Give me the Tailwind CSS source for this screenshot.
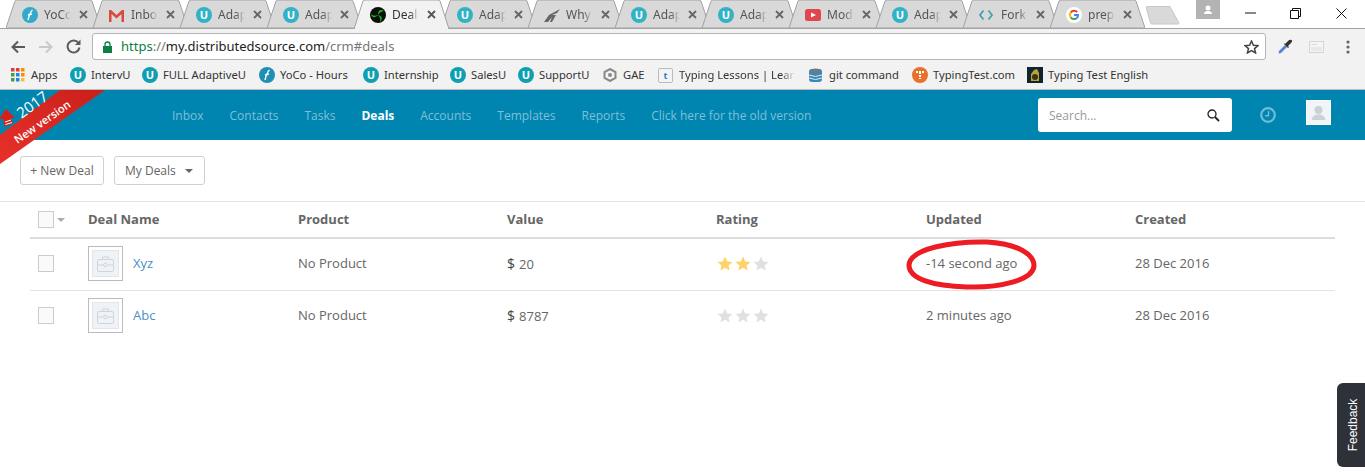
<!DOCTYPE html>
<html lang="en">
<head>
  <meta charset="UTF-8">
  <script src="https://cdn.jsdelivr.net/npm/@tailwindcss/browser@4"></script>
  <title>Deals</title>
</head>
<body class="bg-white font-['Open_Sans',sans-serif] overflow-hidden">
<div class="relative w-[1365px] h-[474px] overflow-hidden">

  <!-- tab strip -->
  <div class="h-[29px] flex items-start pl-[6px] relative border-b border-[#a3a3a3] font-['Noto_Sans',sans-serif] text-[12px] text-[#555]">
    <div class="relative w-[95px] h-[28px] shrink-0">
      <svg class="absolute inset-0" width="95" height="28"><path d="M0 28 L9 1 Q9.500 0 11 0 L84 0 Q85.500 0 86 1 L95 28Z" fill="#d9d9d9" stroke="#a3a3a3"/></svg>
      <svg class="absolute left-[16px] top-[7px]" width="16" height="16" viewBox="0 0 16 16"><circle cx="8" cy="8" r="8" fill="#35a9cb"/><path d="M10.500 3 C8 5 7 9 6 13 M6 8 L10 7" stroke="#fff" stroke-width="1.400" fill="none"/></svg>
      <span class="absolute left-[38px] top-[6px] w-[27px] overflow-hidden whitespace-nowrap [mask-image:linear-gradient(to_right,black_65%,transparent)]">YoCo</span>
      <span class="absolute left-[73px] top-[10px]"><svg class="block" width="10" height="10"><path d="M1 1 L8 8 M8 1 L1 8" stroke="#666" stroke-width="1.800"/></svg></span>
    </div>
    <div class="relative w-[95px] h-[28px] shrink-0 -ml-[8px]">
      <svg class="absolute inset-0" width="95" height="28"><path d="M0 28 L9 1 Q9.500 0 11 0 L84 0 Q85.500 0 86 1 L95 28Z" fill="#d9d9d9" stroke="#a3a3a3"/></svg>
      <svg class="absolute left-[16px] top-[10px]" width="15" height="12" viewBox="0 0 15 12"><path d="M0 0 L2 0 L7.500 5 L13 0 L15 0 L15 12 L12.500 12 L12.500 4 L7.500 8.500 L2.500 4 L2.500 12 L0 12Z" fill="#d9493c"/></svg>
      <span class="absolute left-[38px] top-[6px] w-[27px] overflow-hidden whitespace-nowrap [mask-image:linear-gradient(to_right,black_65%,transparent)]">Inbox</span>
      <span class="absolute left-[73px] top-[10px]"><svg class="block" width="10" height="10"><path d="M1 1 L8 8 M8 1 L1 8" stroke="#666" stroke-width="1.800"/></svg></span>
    </div>
    <div class="relative w-[95px] h-[28px] shrink-0 -ml-[8px]">
      <svg class="absolute inset-0" width="95" height="28"><path d="M0 28 L9 1 Q9.500 0 11 0 L84 0 Q85.500 0 86 1 L95 28Z" fill="#d9d9d9" stroke="#a3a3a3"/></svg>
      <span class="absolute left-[16px] top-[7px] w-[16px] h-[16px] rounded-full bg-[#30b3c6] text-white text-[11px] leading-[16px] text-center font-bold">U</span>
      <span class="absolute left-[38px] top-[6px] w-[27px] overflow-hidden whitespace-nowrap [mask-image:linear-gradient(to_right,black_65%,transparent)]">Adap</span>
      <span class="absolute left-[73px] top-[10px]"><svg class="block" width="10" height="10"><path d="M1 1 L8 8 M8 1 L1 8" stroke="#666" stroke-width="1.800"/></svg></span>
    </div>
    <div class="relative w-[95px] h-[28px] shrink-0 -ml-[8px]">
      <svg class="absolute inset-0" width="95" height="28"><path d="M0 28 L9 1 Q9.500 0 11 0 L84 0 Q85.500 0 86 1 L95 28Z" fill="#d9d9d9" stroke="#a3a3a3"/></svg>
      <span class="absolute left-[16px] top-[7px] w-[16px] h-[16px] rounded-full bg-[#30b3c6] text-white text-[11px] leading-[16px] text-center font-bold">U</span>
      <span class="absolute left-[38px] top-[6px] w-[27px] overflow-hidden whitespace-nowrap [mask-image:linear-gradient(to_right,black_65%,transparent)]">Adap</span>
      <span class="absolute left-[73px] top-[10px]"><svg class="block" width="10" height="10"><path d="M1 1 L8 8 M8 1 L1 8" stroke="#666" stroke-width="1.800"/></svg></span>
    </div>
    <div class="relative w-[95px] h-[29px] shrink-0 -ml-[8px] z-10 text-[#333]">
      <svg class="absolute inset-0" width="95" height="29"><path d="M0 29 L9 1 Q9.500 0 11 0 L84 0 Q85.500 0 86 1 L95 29Z" fill="#f2f2f2" stroke="#a3a3a3"/><path d="M1 29 L94 29" stroke="#f2f2f2" stroke-width="2"/></svg>
      <svg class="absolute left-[16px] top-[7px]" width="16" height="16" viewBox="0 0 16 16"><circle cx="8" cy="8" r="8" fill="#0a0f0a"/><path d="M8 8 C8 3 11 2 14 4 C12 4 10 5 8 8 M8 8 C12 9 13 12 10 15 C11 12 10 10 8 8 M8 8 C5 11 2 11 1 7 C3 9 5 9 8 8" fill="#18c418"/></svg>
      <span class="absolute left-[38px] top-[6px] w-[27px] overflow-hidden whitespace-nowrap [mask-image:linear-gradient(to_right,black_65%,transparent)]">Deals</span>
      <span class="absolute left-[73px] top-[10px]"><svg class="block" width="10" height="10"><path d="M1 1 L8 8 M8 1 L1 8" stroke="#555" stroke-width="1.800"/></svg></span>
    </div>
    <div class="relative w-[95px] h-[28px] shrink-0 -ml-[8px]">
      <svg class="absolute inset-0" width="95" height="28"><path d="M0 28 L9 1 Q9.500 0 11 0 L84 0 Q85.500 0 86 1 L95 28Z" fill="#d9d9d9" stroke="#a3a3a3"/></svg>
      <span class="absolute left-[16px] top-[7px] w-[16px] h-[16px] rounded-full bg-[#30b3c6] text-white text-[11px] leading-[16px] text-center font-bold">U</span>
      <span class="absolute left-[38px] top-[6px] w-[27px] overflow-hidden whitespace-nowrap [mask-image:linear-gradient(to_right,black_65%,transparent)]">Adap</span>
      <span class="absolute left-[73px] top-[10px]"><svg class="block" width="10" height="10"><path d="M1 1 L8 8 M8 1 L1 8" stroke="#666" stroke-width="1.800"/></svg></span>
    </div>
    <div class="relative w-[95px] h-[28px] shrink-0 -ml-[8px]">
      <svg class="absolute inset-0" width="95" height="28"><path d="M0 28 L9 1 Q9.500 0 11 0 L84 0 Q85.500 0 86 1 L95 28Z" fill="#d9d9d9" stroke="#a3a3a3"/></svg>
      <svg class="absolute left-[16px] top-[9px]" width="16" height="13" viewBox="0 0 16 13"><path d="M0 13 L5 6 L16 0 L13 4 L8 6 L12 6 L8 13 L6 13 L8 8 L4 13Z" fill="#666"/></svg>
      <span class="absolute left-[38px] top-[6px] w-[27px] overflow-hidden whitespace-nowrap [mask-image:linear-gradient(to_right,black_65%,transparent)]">Why</span>
      <span class="absolute left-[73px] top-[10px]"><svg class="block" width="10" height="10"><path d="M1 1 L8 8 M8 1 L1 8" stroke="#666" stroke-width="1.800"/></svg></span>
    </div>
    <div class="relative w-[95px] h-[28px] shrink-0 -ml-[8px]">
      <svg class="absolute inset-0" width="95" height="28"><path d="M0 28 L9 1 Q9.500 0 11 0 L84 0 Q85.500 0 86 1 L95 28Z" fill="#d9d9d9" stroke="#a3a3a3"/></svg>
      <span class="absolute left-[16px] top-[7px] w-[16px] h-[16px] rounded-full bg-[#30b3c6] text-white text-[11px] leading-[16px] text-center font-bold">U</span>
      <span class="absolute left-[38px] top-[6px] w-[27px] overflow-hidden whitespace-nowrap [mask-image:linear-gradient(to_right,black_65%,transparent)]">Adap</span>
      <span class="absolute left-[73px] top-[10px]"><svg class="block" width="10" height="10"><path d="M1 1 L8 8 M8 1 L1 8" stroke="#666" stroke-width="1.800"/></svg></span>
    </div>
    <div class="relative w-[95px] h-[28px] shrink-0 -ml-[8px]">
      <svg class="absolute inset-0" width="95" height="28"><path d="M0 28 L9 1 Q9.500 0 11 0 L84 0 Q85.500 0 86 1 L95 28Z" fill="#d9d9d9" stroke="#a3a3a3"/></svg>
      <span class="absolute left-[16px] top-[7px] w-[16px] h-[16px] rounded-full bg-[#30b3c6] text-white text-[11px] leading-[16px] text-center font-bold">U</span>
      <span class="absolute left-[38px] top-[6px] w-[27px] overflow-hidden whitespace-nowrap [mask-image:linear-gradient(to_right,black_65%,transparent)]">Adap</span>
      <span class="absolute left-[73px] top-[10px]"><svg class="block" width="10" height="10"><path d="M1 1 L8 8 M8 1 L1 8" stroke="#666" stroke-width="1.800"/></svg></span>
    </div>
    <div class="relative w-[95px] h-[28px] shrink-0 -ml-[8px]">
      <svg class="absolute inset-0" width="95" height="28"><path d="M0 28 L9 1 Q9.500 0 11 0 L84 0 Q85.500 0 86 1 L95 28Z" fill="#d9d9d9" stroke="#a3a3a3"/></svg>
      <svg class="absolute left-[16px] top-[9px]" width="16" height="12" viewBox="0 0 16 12"><rect width="16" height="12" rx="2.500" fill="#e0474c"/><path d="M6 3.500 L11 6 L6 8.500Z" fill="#fff"/></svg>
      <span class="absolute left-[38px] top-[6px] w-[27px] overflow-hidden whitespace-nowrap [mask-image:linear-gradient(to_right,black_65%,transparent)]">Mod</span>
      <span class="absolute left-[73px] top-[10px]"><svg class="block" width="10" height="10"><path d="M1 1 L8 8 M8 1 L1 8" stroke="#666" stroke-width="1.800"/></svg></span>
    </div>
    <div class="relative w-[95px] h-[28px] shrink-0 -ml-[8px]">
      <svg class="absolute inset-0" width="95" height="28"><path d="M0 28 L9 1 Q9.500 0 11 0 L84 0 Q85.500 0 86 1 L95 28Z" fill="#d9d9d9" stroke="#a3a3a3"/></svg>
      <span class="absolute left-[16px] top-[7px] w-[16px] h-[16px] rounded-full bg-[#30b3c6] text-white text-[11px] leading-[16px] text-center font-bold">U</span>
      <span class="absolute left-[38px] top-[6px] w-[27px] overflow-hidden whitespace-nowrap [mask-image:linear-gradient(to_right,black_65%,transparent)]">Adap</span>
      <span class="absolute left-[73px] top-[10px]"><svg class="block" width="10" height="10"><path d="M1 1 L8 8 M8 1 L1 8" stroke="#666" stroke-width="1.800"/></svg></span>
    </div>
    <div class="relative w-[95px] h-[28px] shrink-0 -ml-[8px]">
      <svg class="absolute inset-0" width="95" height="28"><path d="M0 28 L9 1 Q9.500 0 11 0 L84 0 Q85.500 0 86 1 L95 28Z" fill="#d9d9d9" stroke="#a3a3a3"/></svg>
      <svg class="absolute left-[16px] top-[9px]" width="14" height="12" viewBox="0 0 14 12"><path d="M4.500 1.500 L1 6 L4.500 10.500 M9.500 1.500 L13 6 L9.500 10.500" stroke="#4a9fb0" stroke-width="1.800" fill="none"/></svg>
      <span class="absolute left-[38px] top-[6px] w-[27px] overflow-hidden whitespace-nowrap [mask-image:linear-gradient(to_right,black_65%,transparent)]">Fork</span>
      <span class="absolute left-[73px] top-[10px]"><svg class="block" width="10" height="10"><path d="M1 1 L8 8 M8 1 L1 8" stroke="#666" stroke-width="1.800"/></svg></span>
    </div>
    <div class="relative w-[95px] h-[28px] shrink-0 -ml-[8px]">
      <svg class="absolute inset-0" width="95" height="28"><path d="M0 28 L9 1 Q9.500 0 11 0 L84 0 Q85.500 0 86 1 L95 28Z" fill="#d9d9d9" stroke="#a3a3a3"/></svg>
      <svg class="absolute left-[16px] top-[7px]" width="16" height="16" viewBox="0 0 16 16"><circle cx="8" cy="8" r="8" fill="#fff"/><path d="M12 4.500 A5 5 0 0 0 4 4.800 L5.500 6.200 A3 3 0 0 1 10.500 5.800Z" fill="#ea4335"/><path d="M4 4.800 A5 5 0 0 0 4 11 L5.500 9.700 A3 3 0 0 1 5.500 6.200Z" fill="#fbbc05"/><path d="M4 11 A5 5 0 0 0 11.500 11.700 L10 10.400 A3 3 0 0 1 5.500 9.700Z" fill="#34a853"/><path d="M13 8 L13 7 L8 7 L8 9 L10.800 9 A3 3 0 0 1 10 10.400 L11.500 11.700 A5 5 0 0 0 13 8Z" fill="#4285f4"/></svg>
      <span class="absolute left-[38px] top-[6px] w-[27px] overflow-hidden whitespace-nowrap [mask-image:linear-gradient(to_right,black_65%,transparent)]">prep</span>
      <span class="absolute left-[73px] top-[10px]"><svg class="block" width="10" height="10"><path d="M1 1 L8 8 M8 1 L1 8" stroke="#666" stroke-width="1.800"/></svg></span>
    </div>
    <svg class="mt-[6px] shrink-0" width="36" height="19" viewBox="0 0 36 19"><path d="M1 1 Q1 0.500 2 0.500 L25 0.500 L34 17 Q34 18 33 18 L7 18 Q6 18 5.500 17Z" fill="#d9d9d9" stroke="#c8c8c8"/></svg>

    <div class="ml-[15px] w-[24px] h-[19px] bg-[#b3b3b3] flex items-center justify-center shrink-0">
      <svg width="10" height="10" viewBox="0 0 10 10"><circle cx="5" cy="3" r="2.500" fill="#fff"/><path d="M1 9 Q1 6 5 6 Q9 6 9 9Z" fill="#fff"/></svg>
    </div>
    <div class="ml-[8px] w-[45px] h-[26px] flex items-center justify-center shrink-0">
      <svg width="11" height="2"><path d="M0 1 L11 1" stroke="#111"/></svg>
    </div>
    <div class="w-[45px] h-[26px] flex items-center justify-center shrink-0">
      <svg width="11" height="11"><path d="M0.500 2.500 H8.500 V10.500 H0.500Z M2.500 2.500 V0.500 H10.500 V8.500 H8.500" fill="none" stroke="#111"/></svg>
    </div>
    <div class="w-[46px] h-[26px] flex items-center justify-center shrink-0">
      <svg width="11" height="11"><path d="M0.500 0.500 L10.500 10.500 M10.500 0.500 L0.500 10.500" stroke="#111"/></svg>
    </div>
  </div>

  <!-- address bar -->
  <div class="h-[33px] pt-[2px] bg-[#f2f2f2] flex items-center relative">
    <svg class="ml-[11px] shrink-0" width="15" height="14" viewBox="0 0 15 14"><path d="M14 7 L2 7 M7 1.500 L1.500 7 L7 12.500" stroke="#5a5a5a" stroke-width="2" fill="none"/></svg>
    <svg class="ml-[12px] shrink-0" width="15" height="14" viewBox="0 0 15 14"><path d="M1 7 L13 7 M8 1.500 L13.500 7 L8 12.500" stroke="#c9c9c9" stroke-width="2" fill="none"/></svg>
    <svg class="ml-[13px] shrink-0" width="15" height="15" viewBox="0 0 15 15"><path d="M12.500 4 A6 6 0 1 0 13.500 8.500" stroke="#5a5a5a" stroke-width="2" fill="none"/><path d="M14.500 0.500 L14.500 6 L9 6Z" fill="#5a5a5a"/></svg>
    <div class="ml-[11px] w-[1174px] h-[27px] bg-white border border-[#b5b5b5] rounded-[3px] flex items-center pl-[10px] font-['Noto_Sans',sans-serif] text-[13px] shrink-0">
      <svg width="9" height="12" viewBox="0 0 9 12"><rect y="5" width="9" height="7" fill="#0b8043"/><path d="M2 5 V3.500 A2.500 2.500 0 0 1 7 3.500 V5" stroke="#0b8043" stroke-width="1.300" fill="none"/></svg>
      <span class="ml-[9px] text-[#0b8043]">https</span><span class="text-[#777]">://</span><span class="text-[#222]">my.distributedsource.com</span><span class="text-[#777]">/crm#deals</span>
      <svg class="ml-auto mr-[6px]" width="15" height="14" viewBox="0 0 15 14"><path d="M7.500 1 L9.400 5.200 L14 5.600 L10.500 8.600 L11.600 13 L7.500 10.700 L3.400 13 L4.500 8.600 L1 5.600 L5.600 5.200Z" fill="none" stroke="#444" stroke-width="1.500"/></svg>
    </div>
    <svg class="ml-[11px] shrink-0" width="16" height="16" viewBox="0 0 16 16"><path d="M1.500 14.500 L2 12 L8 6 L10 8 L4 14Z" fill="#5b7fd8"/><path d="M7 5 L11 9 L12 8 L11 7 L14 4 Q16 2 14.500 1 Q13 0 11 2 L8 5 L8 4Z" fill="#333"/></svg>
    <svg class="ml-[16px] shrink-0" width="15" height="12" viewBox="0 0 15 12"><rect x="0.500" y="0.500" width="14" height="11" fill="#f5f5f5" stroke="#d5d5d5"/><path d="M2 3.500 H8 M2 7 H13 M2 9 H13" stroke="#dcdcdc"/></svg>
    <svg class="ml-[22px] shrink-0" width="4" height="14" viewBox="0 0 4 14"><circle cx="2" cy="2" r="1.600" fill="#666"/><circle cx="2" cy="7" r="1.600" fill="#666"/><circle cx="2" cy="12" r="1.600" fill="#666"/></svg>
  </div>

  <!-- bookmarks bar -->
  <div class="h-[28px] pb-[1px] bg-[#f2f2f2] border-b border-[#bdbdbd] flex items-center pl-[11px] font-['Noto_Sans',sans-serif] text-[11.200px] text-[#333] relative whitespace-nowrap">
    <svg class="shrink-0" width="14" height="14" viewBox="0 0 14 14"><rect width="3.500" height="3.500" fill="#e53935"/><rect x="5" width="3.500" height="3.500" fill="#e53935"/><rect x="10" width="3.500" height="3.500" fill="#fb8c00"/><rect y="5" width="3.500" height="3.500" fill="#43a047"/><rect x="5" y="5" width="3.500" height="3.500" fill="#1e88e5"/><rect x="10" y="5" width="3.500" height="3.500" fill="#fb8c00"/><rect y="10" width="3.500" height="3.500" fill="#43a047"/><rect x="5" y="10" width="3.500" height="3.500" fill="#1e88e5"/><rect x="10" y="10" width="3.500" height="3.500" fill="#fbc02d"/></svg>
    <span class="ml-[6px] w-[39px]">Apps</span>
    <span class="w-[16px] h-[16px] rounded-full bg-[#0e9fb3] text-white text-[11px] leading-[16px] text-center font-bold shrink-0">U</span><span class="ml-[5px] w-[51px]">IntervU</span>
    <span class="w-[16px] h-[16px] rounded-full bg-[#0e9fb3] text-white text-[11px] leading-[16px] text-center font-bold shrink-0">U</span><span class="ml-[5px] w-[96px]">FULL AdaptiveU</span>
    <svg class="shrink-0" width="16" height="16" viewBox="0 0 16 16"><circle cx="8" cy="8" r="8" fill="#1f8fb5"/><path d="M10.500 3 C8 5 7 9 6 13 M6 8 L10 7" stroke="#fff" stroke-width="1.400" fill="none"/></svg>
    <span class="ml-[5px] w-[83px]">YoCo - Hours</span>
    <span class="w-[16px] h-[16px] rounded-full bg-[#0e9fb3] text-white text-[11px] leading-[16px] text-center font-bold shrink-0">U</span><span class="ml-[5px] w-[66px]">Internship</span>
    <span class="w-[16px] h-[16px] rounded-full bg-[#0e9fb3] text-white text-[11px] leading-[16px] text-center font-bold shrink-0">U</span><span class="ml-[5px] w-[47px]">SalesU</span>
    <span class="w-[16px] h-[16px] rounded-full bg-[#0e9fb3] text-white text-[11px] leading-[16px] text-center font-bold shrink-0">U</span><span class="ml-[5px] w-[64px]">SupportU</span>
    <svg class="shrink-0" width="14" height="14" viewBox="0 0 14 14"><path d="M7 1 L12.500 4 L12.500 10 L7 13 L1.500 10 L1.500 4Z" fill="none" stroke="#888" stroke-width="2"/><circle cx="7" cy="7" r="2" fill="#888"/></svg>
    <span class="ml-[6px] w-[35px]">GAE</span>
    <span class="w-[15px] h-[15px] bg-[#f4f4f4] border border-[#bbb] rounded-[2px] text-[9px] leading-[13px] text-center text-[#2b7fc2] font-bold shrink-0">t</span>
    <span class="ml-[6px] w-[116px] overflow-hidden [mask-image:linear-gradient(to_right,black_88%,transparent)]">Typing Lessons | Learn</span>
    <svg class="ml-[14px] shrink-0" width="13" height="15" viewBox="0 0 13 15"><rect y="1" width="13" height="13" rx="3" fill="#3d86b8"/><ellipse cx="6.500" cy="3" rx="6" ry="2.500" fill="#6b7c88"/><path d="M0 7 Q6.500 10 13 7 M0 10 Q6.500 13 13 10" stroke="#dceaf3" fill="none"/></svg>
    <span class="ml-[7px] w-[83px]">git command</span>
    <svg class="shrink-0" width="16" height="16" viewBox="0 0 16 16"><circle cx="8" cy="8" r="8" fill="#e8702a"/><path d="M4 5 H12 M8 5 V12" stroke="#fff" stroke-width="2" stroke-dasharray="2 1"/></svg>
    <span class="ml-[5px] w-[94px]">TypingTest.com</span>
    <svg class="shrink-0" width="16" height="16" viewBox="0 0 16 16"><rect width="16" height="16" fill="#10262f"/><path d="M4 14 L4 7 L7 3 L10 2 L12 6 L12 14Z" fill="#b6a43a"/><circle cx="8" cy="10" r="3" fill="#3d3312"/></svg>
    <span class="ml-[5px]">Typing Test English</span>
  </div>

  <!-- app header -->
  <header class="h-[50px] bg-[#0085b0] flex items-center text-[12px] text-[#7ec0d8] whitespace-nowrap">
    <nav class="ml-[172px] pt-[2px] flex gap-[26px] w-[866px]">
      <a>Inbox</a>
      <a>Contacts</a>
      <a>Tasks</a>
      <a class="text-white font-bold">Deals</a>
      <a>Accounts</a>
      <a>Templates</a>
      <a>Reports</a>
      <a>Click here for the old version</a>
    </nav>
    <div class="w-[194px] h-[34px] pt-[1px] bg-white rounded-[3px] flex items-center pl-[11px] pr-[12px] text-[#999] text-[12px]">
      Search...
      <svg class="ml-auto" width="13" height="13" viewBox="0 0 13 13"><circle cx="5" cy="5" r="4" fill="none" stroke="#222" stroke-width="1.300"/><path d="M8 8 L12 12" stroke="#222" stroke-width="1.800"/></svg>
    </div>
    <svg class="ml-[28px]" width="16" height="16" viewBox="0 0 16 16"><circle cx="8" cy="8" r="6.800" fill="none" stroke="#6fbcd6" stroke-width="2.200"/><path d="M8.500 4 V8.800 H5" fill="none" stroke="#6fbcd6" stroke-width="1.500"/></svg>
    <div class="ml-[30px] w-[25px] h-[25px] bg-[#f2f5f8] border border-white flex items-center justify-center -mt-[5px]">
      <svg width="15" height="16" viewBox="0 0 15 16"><circle cx="7.500" cy="5" r="4" fill="#c9d2d9"/><path d="M0.500 15 Q1 10.500 5.500 9.500 H9.500 Q14 10.500 14.500 15Z" fill="#c9d2d9"/></svg>
    </div>
  </header>

  <!-- deal toolbar -->
  <div class="h-[62px] pl-[20px] pt-[16px] flex gap-[10px] border-b border-[#e3e3e3] text-[12px] text-[#666]">
    <button class="w-[84px] h-[29px] border border-[#d0d0d0] rounded-[3px] bg-white">+ New Deal</button>
    <button class="w-[91px] h-[29px] border border-[#d0d0d0] rounded-[3px] bg-white flex items-center pl-[10px]">My Deals<span class="ml-[9px] w-0 h-0 border-x-[4px] border-x-transparent border-t-[4px] border-t-[#666]"></span></button>
  </div>

  <!-- deals table -->
  <div class="ml-[30px] w-[1305px] text-[13px] text-[#666]">
    <div class="h-[37px] border-b-2 border-[#dcdcdc] grid grid-cols-[58px_210px_209px_209px_210px_209px_1fr] items-center font-bold text-[#666]">
      <div class="flex items-center pl-[8px]">
        <span class="w-[16px] h-[17px] border border-[#ccc] bg-[#fafafa]"></span>
        <span class="ml-[3px] w-0 h-0 border-x-[4px] border-x-transparent border-t-[4px] border-t-[#aaa]"></span>
      </div>
      <div>Deal Name</div><div>Product</div><div>Value</div><div>Rating</div><div>Updated</div><div>Created</div>
    </div>

    <div class="h-[52px] pb-[2px] border-b border-[#e3e3e3] grid grid-cols-[58px_210px_209px_209px_210px_209px_1fr] items-center">
      <div class="pl-[8px]"><span class="block w-[16px] h-[17px] border border-[#ccc] bg-[#fafafa]"></span></div>
      <div class="flex items-center">
        <span class="w-[35px] h-[35px] border border-[#bbb] p-[3px] block">
          <span class="w-full h-full bg-[#eff3f7] border border-[#e3e6e9] flex items-center justify-center">
            <svg width="17" height="16" viewBox="0 0 17 16"><rect x="0.500" y="3.500" width="16" height="12" rx="1.500" fill="none" stroke="#ced5db"/><path d="M5.500 3.500 V1 H11.500 V3.500 M0.500 9 H6.500 M10.500 9 H16.500" fill="none" stroke="#ced5db"/><circle cx="8.500" cy="9" r="1.800" fill="none" stroke="#ced5db"/></svg>
          </span>
        </span>
        <a class="ml-[10px] text-[#4a90c8]">Xyz</a>
      </div>
      <div>No Product</div>
      <div><span class="text-[#444] text-[14px] mr-[4px]">$</span>20</div>
      <div class="flex gap-[2px] ml-[1px]">
        <svg width="16" height="15" viewBox="0 0 16 15"><path d="M8 0.500 L10.200 5.400 L15.500 5.900 L11.500 9.400 L12.700 14.500 L8 11.800 L3.300 14.500 L4.500 9.400 L0.500 5.900 L5.800 5.400Z" fill="#fdd268"/></svg>
        <svg width="16" height="15" viewBox="0 0 16 15"><path d="M8 0.500 L10.200 5.400 L15.500 5.900 L11.500 9.400 L12.700 14.500 L8 11.800 L3.300 14.500 L4.500 9.400 L0.500 5.900 L5.800 5.400Z" fill="#fdd268"/></svg>
        <svg width="16" height="15" viewBox="0 0 16 15"><path d="M8 0.500 L10.200 5.400 L15.500 5.900 L11.500 9.400 L12.700 14.500 L8 11.800 L3.300 14.500 L4.500 9.400 L0.500 5.900 L5.800 5.400Z" fill="#e0e0e0"/></svg>
      </div>
      <div>-14 second ago</div>
      <div>28 Dec 2016</div>
    </div>

    <div class="h-[52px] pb-[3px] grid grid-cols-[58px_210px_209px_209px_210px_209px_1fr] items-center">
      <div class="pl-[8px]"><span class="block w-[16px] h-[17px] border border-[#ccc] bg-[#fafafa]"></span></div>
      <div class="flex items-center">
        <span class="w-[35px] h-[35px] border border-[#bbb] p-[3px] block">
          <span class="w-full h-full bg-[#eff3f7] border border-[#e3e6e9] flex items-center justify-center">
            <svg width="17" height="16" viewBox="0 0 17 16"><rect x="0.500" y="3.500" width="16" height="12" rx="1.500" fill="none" stroke="#ced5db"/><path d="M5.500 3.500 V1 H11.500 V3.500 M0.500 9 H6.500 M10.500 9 H16.500" fill="none" stroke="#ced5db"/><circle cx="8.500" cy="9" r="1.800" fill="none" stroke="#ced5db"/></svg>
          </span>
        </span>
        <a class="ml-[10px] text-[#4a90c8]">Abc</a>
      </div>
      <div>No Product</div>
      <div><span class="text-[#444] text-[14px] mr-[4px]">$</span>8787</div>
      <div class="flex gap-[2px] ml-[1px]">
        <svg width="16" height="15" viewBox="0 0 16 15"><path d="M8 0.500 L10.200 5.400 L15.500 5.900 L11.500 9.400 L12.700 14.500 L8 11.800 L3.300 14.500 L4.500 9.400 L0.500 5.900 L5.800 5.400Z" fill="#e0e0e0"/></svg>
        <svg width="16" height="15" viewBox="0 0 16 15"><path d="M8 0.500 L10.200 5.400 L15.500 5.900 L11.500 9.400 L12.700 14.500 L8 11.800 L3.300 14.500 L4.500 9.400 L0.500 5.900 L5.800 5.400Z" fill="#e0e0e0"/></svg>
        <svg width="16" height="15" viewBox="0 0 16 15"><path d="M8 0.500 L10.200 5.400 L15.500 5.900 L11.500 9.400 L12.700 14.500 L8 11.800 L3.300 14.500 L4.500 9.400 L0.500 5.900 L5.800 5.400Z" fill="#e0e0e0"/></svg>
      </div>
      <div>2 minutes ago</div>
      <div>28 Dec 2016</div>
    </div>
  </div>

  <!-- ribbon sits over the header corner -->
  <svg class="absolute left-0 top-[90px]" width="106" height="76" viewBox="0 0 106 76"><defs><linearGradient id="rb" x1="0" y1="1" x2="1" y2="0"><stop offset="0" stop-color="#e8302a"/><stop offset="1" stop-color="#c9201a"/></linearGradient></defs><path d="M60 0 L105 0 L0 74 L0 45Z" fill="url(#rb)"/></svg>
  <span class="absolute left-[9px] top-[116px] w-[66px] text-center text-white text-[11px] font-semibold -rotate-[35deg] whitespace-nowrap leading-none">New version</span>
  <span class="absolute left-[15px] top-[97px] text-white text-[15px] -rotate-[36deg] leading-none">2017</span>
  <svg class="absolute left-0 top-[108px]" width="16" height="20" viewBox="0 0 16 20"><path d="M6 1 L15 10 L11 10 L13 15 L5 19 L3 11 L-1 11Z" fill="#d8201a"/><path d="M5 14 L11 12 M5.500 16.500 L12 14.500" stroke="#fff"/></svg>

  <!-- hand drawn annotation -->
  <svg class="absolute left-[905px] top-[238px]" width="134" height="54" viewBox="0 0 134 54"><path d="M4 27 C5 10 50 3 82 4 C113 6 129 16 129 28 C128 42 95 50 62 49 C28 48 4 41 4 27Z" fill="none" stroke="#ed1c24" stroke-width="5"/></svg>

  <!-- feedback tab -->
  <div class="absolute left-[1337px] top-[383px] w-[28px] h-[84px] pl-[5px] bg-[#2e3138] rounded-l-[6px] flex items-center justify-center">
    <span class="-rotate-90 text-white text-[12px] font-['Liberation_Sans',sans-serif] whitespace-nowrap">Feedback</span>
  </div>
</div>
</body>
</html>
